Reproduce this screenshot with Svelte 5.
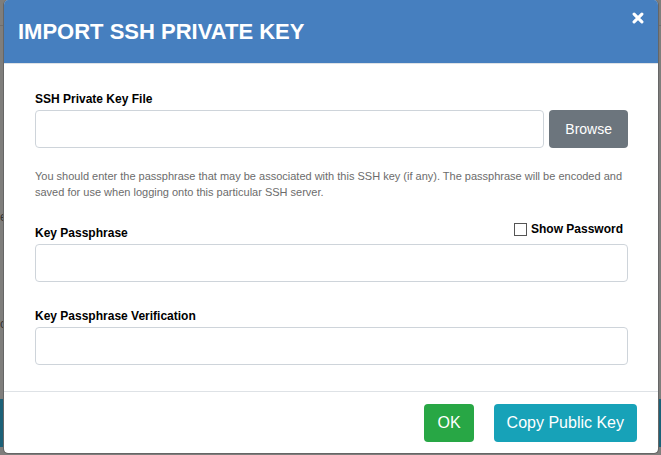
<script>
  let fileName = $state('');
  let passphrase = $state('');
  let verification = $state('');
  let showPassword = $state(false);
  let fieldType = $derived(showPassword ? 'text' : 'password');
</script>

<div class="stage">
  <div class="behind" aria-hidden="true">
    <div class="topbar"></div>
    <div class="content">
      <span>e</span>
      <span>c</span>
    </div>
    <div class="band"></div>
  </div>

  <div class="dialog" role="dialog" aria-modal="true" aria-labelledby="title">
    <header>
      <h1 id="title">IMPORT SSH PRIVATE KEY</h1>
      <button class="close" type="button" aria-label="Close">
        <svg viewBox="0 0 12 12" width="12" height="12" aria-hidden="true">
          <path d="M2.1 2.1 L9.9 9.9 M9.9 2.1 L2.1 9.9" stroke="#fff" stroke-width="3.1" stroke-linecap="round" fill="none" />
        </svg>
      </button>
    </header>

    <main>
      <div class="field">
        <label for="file">SSH Private Key File</label>
        <div class="row">
          <input id="file" class="text" type="text" bind:value={fileName} />
          <button class="btn browse" type="button">Browse</button>
        </div>
      </div>

      <p>You should enter the passphrase that may be associated with this SSH key (if any). The passphrase will be encoded and saved for use when logging onto this particular SSH server.</p>

      <div class="field">
        <div class="heading">
          <label for="pass">Key Passphrase</label>
          <div class="show">
            <input id="show" type="checkbox" bind:checked={showPassword} />
            <label for="show">Show Password</label>
          </div>
        </div>
        <input id="pass" class="text" type={fieldType} bind:value={passphrase} />
      </div>

      <div class="field last">
        <label for="verify">Key Passphrase Verification</label>
        <input id="verify" class="text" type={fieldType} bind:value={verification} />
      </div>
    </main>

    <footer>
      <button class="btn ok" type="button">OK</button>
      <button class="btn copy" type="button">Copy Public Key</button>
    </footer>
  </div>
</div>

<style>
  :global(body) {
    margin: 0;
    background: #7f7e7c;
  }
  .stage,
  .stage * {
    box-sizing: border-box;
  }
  .stage {
    position: relative;
    min-height: 100vh;
    padding: 0 2px 1px 3px;
    overflow: hidden;
    font-family: "Liberation Sans", Arial, sans-serif;
    color: #000;
  }
  .behind {
    position: absolute;
    inset: 0;
    display: flex;
    flex-direction: column;
    padding-bottom: 8px;
    background: #7f7e7c;
  }
  .topbar {
    height: 26px;
    border-bottom: 1px solid #6e6e6e;
  }
  .content {
    flex: 1;
    display: flex;
    flex-direction: column;
    gap: 91px;
    padding-top: 183px;
    font-size: 12px;
    line-height: 16px;
    color: #333;
  }
  .band {
    height: 48px;
    background: #1c6178;
  }
  .dialog {
    position: relative;
    background: #fff;
    background-clip: padding-box;
    border: 1px solid #666;
    border-top: 0;
    border-radius: 5px;
    overflow: hidden;
  }
  header {
    display: flex;
    justify-content: space-between;
    align-items: flex-start;
    padding: 12px 14px 11px;
    background: #467fbf;
    border-bottom: 1px solid #dee2e6;
  }
  h1 {
    margin: 0;
    font-size: 22px;
    line-height: 40px;
    font-weight: 700;
    color: #fff;
  }
  .close {
    display: block;
    padding: 0;
    border: 0;
    background: none;
    line-height: 0;
    cursor: pointer;
  }
  main {
    padding: 27px 30px 26px 31px;
  }
  label {
    display: block;
    font-size: 12px;
    line-height: 16px;
    font-weight: 700;
  }
  .field {
    display: flex;
    flex-direction: column;
    gap: 3px;
  }
  .last {
    margin-top: 26px;
  }
  .row {
    display: flex;
    gap: 5px;
  }
  .text {
    display: block;
    width: 100%;
    min-width: 0;
    height: 38px;
    padding: 6px 12px;
    border: 1px solid #ced4da;
    border-radius: 4px;
    background: #fff;
    font: 16px "Liberation Sans", Arial, sans-serif;
  }
  p {
    margin: 20px 0 21px;
    font-size: 11px;
    line-height: 16px;
    color: #6c6c6c;
  }
  .heading {
    display: flex;
    justify-content: space-between;
    align-items: flex-end;
  }
  .show {
    display: flex;
    align-items: center;
    gap: 4px;
    padding: 0 5px 4px 0;
  }
  .show input {
    appearance: none;
    width: 13px;
    height: 13px;
    margin: 0;
    border: 1px solid #555;
    background: #fff;
  }
  .show input:checked {
    background: #467fbf;
  }
  .btn {
    flex: none;
    height: 38px;
    padding: 0 13px;
    border: 0;
    border-radius: 4px;
    color: #fff;
    font: 16px "Liberation Sans", Arial, sans-serif;
    cursor: pointer;
  }
  .browse {
    padding: 0 16px;
    background: #6c757d;
    font-size: 14px;
  }
  .ok {
    background: #28a745;
  }
  .copy {
    background: #17a2b8;
  }
  footer {
    display: flex;
    justify-content: flex-end;
    gap: 20px;
    padding: 12px 21px 11px;
    border-top: 1px solid #dee2e6;
  }
</style>
